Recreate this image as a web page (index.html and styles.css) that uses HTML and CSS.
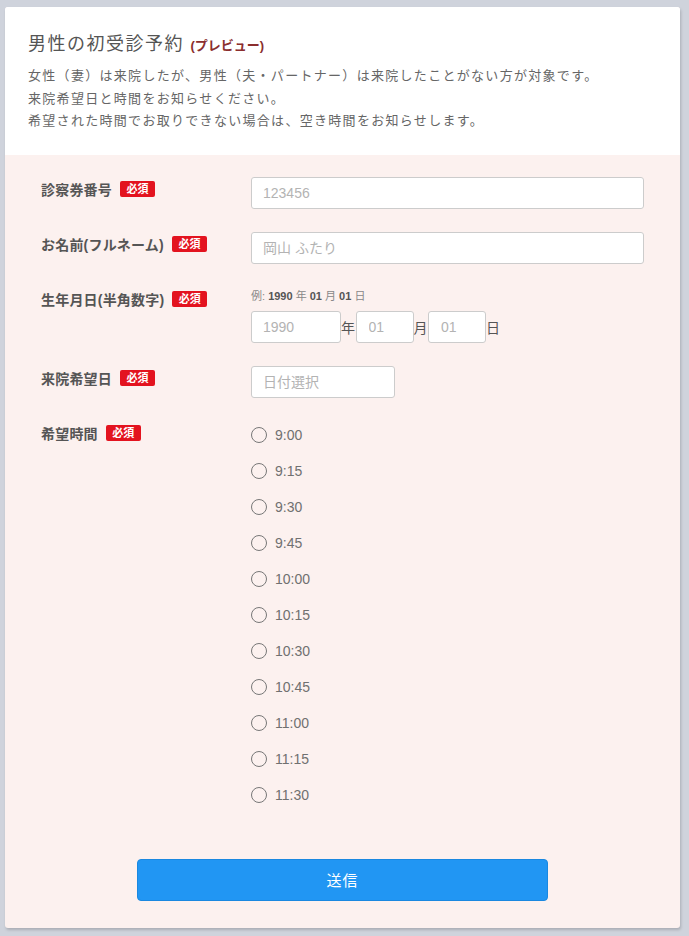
FILE: index.html
```html
<!DOCTYPE html>
<html lang="ja">
<head>
<meta charset="utf-8">
<title>男性の初受診予約</title>
<link rel="stylesheet" href="styles.css">
</head>
<body>
<div class="card">
  <header class="head">
    <h1 class="title">男性の初受診予約 <span class="preview">(プレビュー)</span></h1>
    <p class="desc">女性（妻）は来院したが、男性（夫・パートナー）は来院したことがない方が対象です。<br>来院希望日と時間をお知らせください。<br>希望された時間でお取りできない場合は、空き時間をお知らせします。</p>
  </header>
  <form class="body">
    <div class="row">
      <div class="label">診察券番号<span class="req">必須</span></div>
      <div class="field"><input class="inp full" type="text" placeholder="123456"></div>
    </div>
    <div class="row">
      <div class="label">お名前(フルネーム)<span class="req">必須</span></div>
      <div class="field"><input class="inp full" type="text" placeholder="岡山 ふたり"></div>
    </div>
    <div class="row">
      <div class="label">生年月日(半角数字)<span class="req">必須</span></div>
      <div class="field">
        <div class="example">例: <b>1990</b> 年 <b>01</b> 月 <b>01</b> 日</div>
        <div class="dates">
          <input class="inp year" type="text" placeholder="1990"><span class="unit">年</span>
          <input class="inp md" type="text" placeholder="01"><span class="unit">月</span>
          <input class="inp md" type="text" placeholder="01"><span class="unit">日</span>
        </div>
      </div>
    </div>
    <div class="row">
      <div class="label">来院希望日<span class="req">必須</span></div>
      <div class="field"><input class="inp pick" type="text" placeholder="日付選択"></div>
    </div>
    <div class="row">
      <div class="label">希望時間<span class="req">必須</span></div>
      <div class="field radios">
        <label class="radio"><span class="circle"></span>9:00</label>
        <label class="radio"><span class="circle"></span>9:15</label>
        <label class="radio"><span class="circle"></span>9:30</label>
        <label class="radio"><span class="circle"></span>9:45</label>
        <label class="radio"><span class="circle"></span>10:00</label>
        <label class="radio"><span class="circle"></span>10:15</label>
        <label class="radio"><span class="circle"></span>10:30</label>
        <label class="radio"><span class="circle"></span>10:45</label>
        <label class="radio"><span class="circle"></span>11:00</label>
        <label class="radio"><span class="circle"></span>11:15</label>
        <label class="radio"><span class="circle"></span>11:30</label>
      </div>
    </div>
    <div class="actions">
      <button class="submit" type="button">送信</button>
    </div>
  </form>
</div>
</body>
</html>
```

FILE: styles.css
```css
* { box-sizing: border-box; }
html, body { margin: 0; padding: 0; }
body {
  background: #cfd3dc;
  font-family: "Liberation Sans", "Noto Sans CJK JP", sans-serif;
  color: #555;
  padding: 7px 9px 8px 5px;
  text-spacing-trim: space-all;
}
.card {
  width: 675px;
  background: #fcf1ef;
  border-radius: 3px;
  box-shadow: 1px 2px 3px rgba(0,0,0,0.18);
  overflow: hidden;
}
.head {
  background: #fff;
  padding: 24px 24px 22px 23px;
}
.title {
  margin: 0;
  font-size: 18px;
  font-weight: normal;
  letter-spacing: 1.5px;
  line-height: 26px;
  color: #555;
}
.preview {
  font-size: 13px;
  font-weight: bold;
  color: #8b2e2e;
  letter-spacing: 0;
}
.desc {
  margin: 6px 0 0;
  font-size: 13px;
  line-height: 22.5px;
  letter-spacing: 1.3px;
  color: #666;
}
.body {
  padding: 22px 36px 27px 36px;
}
.row {
  display: grid;
  grid-template-columns: 210px 1fr;
  margin-bottom: 23px;
}
.label {
  font-size: 14px;
  font-weight: bold;
  letter-spacing: 0.2px;
  color: #555;
  padding-top: 0;
  display: flex;
  align-items: center;
  height: 24px;
}
.req {
  display: inline-block;
  background: #e3131f;
  color: #fff;
  font-size: 11px;
  font-weight: bold;
  letter-spacing: 0;
  line-height: 16px;
  padding: 0 6.5px;
  border-radius: 2px;
  margin-left: 8px;
}
.inp {
  height: 32px;
  border: 1px solid #ccc;
  border-radius: 3px;
  background: #fff;
  font-family: "Liberation Sans", "Noto Sans CJK JP", sans-serif;
  font-size: 14px;
  padding: 0 11px;
  color: #555;
  outline: none;
}
.inp::placeholder { color: #b3b3b3; }
.full { width: 393px; display: block; }
.example {
  font-size: 11px;
  color: #888;
  line-height: 18px;
  margin-bottom: 6px;
}
.example b { color: #555; }
.dates { display: flex; align-items: center; }
.year { width: 90px; }
.md { width: 58px; padding-left: 12px; }
.unit {
  font-size: 14px;
  color: #555;
  width: 14.5px;
}
.pick { width: 144px; display: block; }
.radios { display: flex; flex-direction: column; gap: 8px; }
.radio {
  display: flex;
  align-items: center;
  height: 28px;
  font-size: 14px;
  color: #707070;
}
.circle {
  width: 16px;
  height: 16px;
  border: 1.5px solid #777;
  border-radius: 50%;
  margin-right: 8px;
  background: transparent;
}
.actions {
  display: flex;
  justify-content: center;
  padding-top: 27px;
}
.submit {
  width: 411px;
  height: 42px;
  background: #2196f3;
  border: 1px solid #1a88e0;
  border-radius: 4px;
  color: #fff;
  font-family: "Liberation Sans", "Noto Sans CJK JP", sans-serif;
  font-size: 15px;
  letter-spacing: 1px;
}
```
